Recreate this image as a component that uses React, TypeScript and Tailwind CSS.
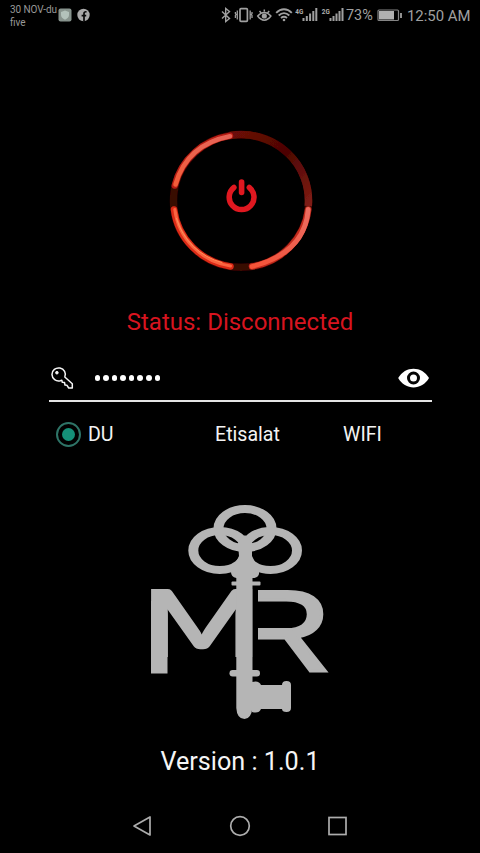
import React from "react";

function StatusBar() {
  return (
    <header className="flex h-[30px] w-full items-start pl-[10px] text-[#a0a0a0]">
      <div className="w-[48px] pt-[3px] text-[10px] leading-[13px] whitespace-nowrap text-[#989898]">
        <div className="tracking-[-0.1px]">30 NOV-du</div>
        <div>five</div>
      </div>
      <svg className="mt-[8px] h-[14px] w-[34px] shrink-0" viewBox="58 8 34 14">
        <rect x="58.5" y="8.5" width="13" height="13" rx="2" fill="#87938d" />
        <path d="M65 10.5l4 1.4v3.2c0 2-1.6 3.6-4 4.6c-2.4-1-4-2.6-4-4.6v-3.2z" fill="#b3c2bb" />
        <circle cx="83.5" cy="15" r="6.2" fill="#a9a9a9" />
        <path d="M84 21.500v-8c0-1.300.8-1.900 2.500-1.700M81.600 15.700h4.600" fill="none" stroke="#080808" strokeWidth="1.700" />
      </svg>
      <svg className="ml-[127px] h-[30px] w-[126px] shrink-0" viewBox="219 0 126 30" fill="none" stroke="#a0a0a0">
        <path d="M222 11.500l7.500 7l-3.800 3v-13l3.800 3l-7.500 7" strokeWidth="1.400" />
        <rect x="240" y="8.700" width="7.400" height="12.600" rx="1" strokeWidth="1.700" />
        <path d="M237.300 10.500v9M250.200 10.500v9M235.400 12v1.500l.7 1l-.7 1V18M252 12v1.500l-.7 1l.7 1V18" strokeWidth="1.300" />
        <path d="M257.700 16c4-4.800 9.200-4.800 13.200 0c-4 5.500-9.200 5.500-13.200 0zM259.500 11l1.500 1.700M264.300 9.500v2M269.200 11l-1.500 1.700" strokeWidth="1.500" />
        <circle cx="264.300" cy="16" r="2.600" fill="#a0a0a0" stroke="none" />
        <path d="M276.200 12.800c4.700-4.700 10.900-4.700 15.600 0M278.700 15.500c3.200-3 7.400-3 10.600 0M281 18c2-1.600 4-1.600 6 0" strokeWidth="1.900" />
        <circle cx="284" cy="20" r="1.300" fill="#a0a0a0" stroke="none" />
        <path d="M303.500 21v-3M306.800 21v-5M310.100 21v-7.500M313.300 21v-10M316.300 21V8M330.500 21v-3M333.500 21v-5M336.500 21v-7.500M339.500 21v-10M342.500 21V8" strokeWidth="2" />
        <g fill="#b0b0b0" stroke="none" fontSize="7.600" fontWeight="700" fontFamily="Roboto, sans-serif">
          <text x="295.300" y="14" textLength="8" lengthAdjust="spacingAndGlyphs">4G</text>
          <text x="321.800" y="14" textLength="8" lengthAdjust="spacingAndGlyphs">2G</text>
        </g>
      </svg>
      <span className="mt-[6px] ml-px w-[28px] text-[14.400px] leading-5 whitespace-nowrap">73%</span>
      <svg className="mt-[9px] ml-[3px] h-[13px] w-[26px] shrink-0" viewBox="377 9 26 13">
        <rect x="378" y="10" width="20.500" height="10.500" rx="1" fill="none" stroke="#858585" strokeWidth="1.200" />
        <rect x="379" y="11" width="15" height="8.500" fill="#b0b0b0" />
        <rect x="400" y="13" width="2" height="5" fill="#909090" />
      </svg>
      <span className="mt-[6px] ml-[4px] text-[14.900px] leading-5 whitespace-nowrap">12:50 AM</span>
    </header>
  );
}

function PowerButton() {
  return (
    <button className="mt-[92px] h-[156px] w-[162px]" aria-label="Connect">
      <svg className="h-full w-full" viewBox="159 122 162 156" fill="none">
        <defs>
          <filter id="soft" x="-20%" y="-20%" width="140%" height="140%">
            <feGaussianBlur stdDeviation="0.700" />
          </filter>
          <linearGradient id="dim" x1="232" y1="134" x2="309" y2="206" gradientUnits="userSpaceOnUse">
            <stop offset="0" stopColor="#6c0a07" />
            <stop offset=".5" stopColor="#4c0503" />
            <stop offset="1" stopColor="#7f1d14" />
          </linearGradient>
          <linearGradient id="glowA" x1="176" y1="186" x2="231" y2="135" gradientUnits="userSpaceOnUse">
            <stop offset="0" stopColor="#f35b39" />
            <stop offset=".6" stopColor="#ea6552" />
            <stop offset="1" stopColor="#e56355" />
          </linearGradient>
          <linearGradient id="glowB" x1="308" y1="208" x2="252" y2="266" gradientUnits="userSpaceOnUse">
            <stop offset="0" stopColor="#ee6d60" />
            <stop offset=".6" stopColor="#ee5b48" />
            <stop offset="1" stopColor="#f65337" />
          </linearGradient>
        </defs>
        <g filter="url(#soft)">
          <ellipse cx="241" cy="201" rx="67.500" ry="66.300" stroke="#380705" strokeWidth="7.500" />
          <path d="M230 135.500A67.500 66.300 0 0 1 308.300 206" stroke="url(#dim)" strokeWidth="7.500" />
          <g strokeLinecap="round">
            <path d="M174.800 185.500A67.500 66.300 0 0 1 230 135.800" stroke="#b51d12" strokeWidth="6.500" />
            <path d="M308.200 209.500A67.500 66.300 0 0 1 252 266.500" stroke="#c12a1b" strokeWidth="6.500" />
            <path d="M230.500 266.500A67.500 66.300 0 0 1 174 209.500" stroke="#dc2b16" strokeWidth="6.500" />
            <path d="M175.500 184.500Q187 144.500 230 136.300" stroke="url(#glowA)" strokeWidth="4.600" />
            <path d="M308.200 209.500Q305 253 252 266.500" stroke="url(#glowB)" strokeWidth="4.800" />
            <path d="M174.800 209.500A66 65 0 0 0 230.500 266" stroke="#fb6440" strokeWidth="3" />
            <path d="M176.500 218.500A64 64 0 0 0 222 262.500" stroke="#ff8f58" strokeWidth="1" />
          </g>
        </g>
        <path d="M233.900 187.500A12.400 12.400 0 1 0 249.300 187.500" stroke="#e01820" strokeWidth="5.500" strokeLinecap="round" />
        <path d="M241.600 182v10.500" stroke="#e01820" strokeWidth="5.600" strokeLinecap="round" />
      </svg>
    </button>
  );
}

function PasswordField() {
  return (
    <div className="mt-[19px] flex h-[45px] w-[383px] items-center border-b-2 border-[#e4e4e4] pb-px text-white">
      <svg className="ml-px h-[24px] w-[24px]" viewBox="50 366 24 24" fill="none" stroke="#f5f5f5" strokeWidth="1.500" strokeLinejoin="round">
        <path d="M64.800 377A6.700 6.500 0 1 0 60.300 380.700L61.800 380.200L62.300 382.300L64.500 382.500L65 385L67 385.300L68.700 388H72.300V383.800Z" />
        <circle cx="56.900" cy="372.700" r="1.300" fill="#f5f5f5" strokeWidth="1" />
      </svg>
      <div className="ml-[21px] flex gap-[3px]">
        {Array.from({ length: 8 }, (_, i) => (
          <span key={i} className="h-[5.600px] w-[5.600px] rounded-full bg-white" />
        ))}
      </div>
      <svg className="mr-[2px] ml-auto h-[20px] w-[32px]" viewBox="398 368 32 20">
        <path d="M398.200 378C405 365.500 422 365.500 429 378C422 390.500 405 390.500 398.200 378Z" fill="#fff" />
        <circle cx="413.500" cy="378" r="5" fill="none" stroke="#050505" strokeWidth="3" />
      </svg>
    </div>
  );
}

function NetworkChoices() {
  return (
    <div className="mt-[17px] flex h-[32px] w-[368px] items-center text-[19.600px] text-[#f3f3f3]">
      <span className="-mt-[2px] flex h-[25px] w-[25px] items-center justify-center rounded-full border-[2.500px] border-[#2e7467]">
        <span className="h-[13px] w-[13px] rounded-full bg-[#159078]" />
      </span>
      <span className="ml-[7px] w-[127px]">DU</span>
      <span className="w-[128px]">Etisalat</span>
      <span>WIFI</span>
    </div>
  );
}

function Logo() {
  return (
    <svg className="mt-[52px] h-[218px] w-[220px] overflow-visible" viewBox="130 502 220 218" fill="#b5b5b5">
      <g transform="translate(230.900 669.700) scale(1.210 1)">
        <text fontFamily="Liberation Sans, sans-serif" fontWeight="400" fontSize="115.500" stroke="#b5b5b5" strokeWidth="2.800">R</text>
      </g>
      <rect x="225" y="585" width="33" height="90" fill="#000" />
      <g transform="translate(141.500 655.500) scale(1.090 .8)">
        <text fontFamily="Lato, sans-serif" fontWeight="900" fontSize="116">M</text>
      </g>
      <rect x="151" y="600" width="16.500" height="72.500" />
      <g fill="none" stroke="#b5b5b5" strokeWidth="10" transform="scale(1 .8)">
        <ellipse cx="245" cy="659.400" rx="26.500" ry="24.400" />
        <ellipse cx="219.800" cy="686.900" rx="26.500" ry="24.400" />
        <ellipse cx="270.500" cy="686.900" rx="26.500" ry="24.400" />
      </g>
      <path d="M238 542L245 534L252 542V555L255 561L259 570V573Q258 577 252.500 577V707Q251 718 244.500 718Q237 718 236.300 707V577Q231 576 231 571L236 561L239 555Z" />
      <rect x="231.500" y="580.500" width="29" height="4" rx="1" />
      <rect x="229.500" y="669" width="30.500" height="6.500" rx="3.200" />
      <path d="M252 681Q259 679 261 684H282Q282 680 286.500 680Q291 680 291 684V707Q291 711 286.500 711Q282 711 282 708H261Q259 713 252 711Z" />
    </svg>
  );
}

export default function App() {
  return (
    <main className="flex h-[853px] w-[480px] flex-col items-center overflow-hidden bg-black font-[Roboto,sans-serif]">
      <StatusBar />
      <PowerButton />
      <h1 className="mt-[28px] text-[24px] leading-[32px] whitespace-nowrap text-[#d7141f]">Status: Disconnected</h1>
      <PasswordField />
      <NetworkChoices />
      <Logo />
      <p className="mt-[25px] text-[25.200px] leading-[32px] text-[#f5f5f5]">Version : 1.0.1</p>
      <nav className="mt-[36px] flex h-[24px] w-[218px] items-center justify-between">
        <svg className="h-6 w-6" viewBox="0 0 24 24" fill="none" stroke="#adadad" strokeWidth="1.700" strokeLinejoin="round"><path d="M19 3V21L3 12Z" /></svg>
        <svg className="h-6 w-6" viewBox="0 0 24 24" fill="none" stroke="#adadad" strokeWidth="1.700"><circle cx="12" cy="12" r="9.300" /></svg>
        <svg className="h-6 w-6" viewBox="0 0 24 24" fill="none" stroke="#adadad" strokeWidth="1.700"><rect x="4" y="3.500" width="17" height="17" /></svg>
      </nav>
    </main>
  );
}
